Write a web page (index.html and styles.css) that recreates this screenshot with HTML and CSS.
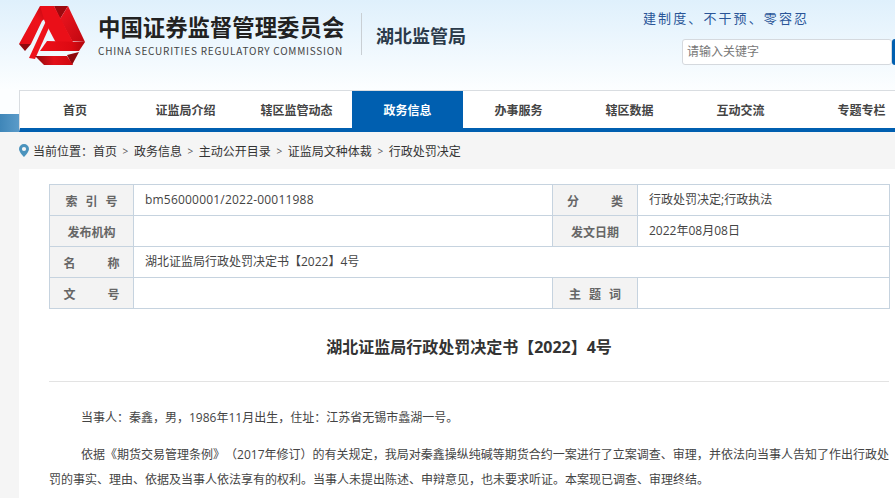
FILE: index.html
```html
<!DOCTYPE html>
<html lang="zh-CN">
<head>
<meta charset="utf-8">
<title>行政处罚决定</title>
<link rel="stylesheet" href="styles.css">
</head>
<body>
<div class="page">
  <header class="top">
    <div class="masthead">
      <svg class="logo" viewBox="19 6 67 60" width="67" height="60" aria-hidden="true">
        <defs>
          <linearGradient id="gh" x1="0" x2="1" y1="0" y2="0"><stop offset="0" stop-color="#ee1019"/><stop offset="0.7" stop-color="#dd0912"/><stop offset="1" stop-color="#b0060d"/></linearGradient>
          <linearGradient id="gb" x1="0" x2="1" y1="0" y2="0"><stop offset="0" stop-color="#8c0a0e"/><stop offset="0.5" stop-color="#e3101a"/><stop offset="1" stop-color="#d0080f"/></linearGradient>
          <linearGradient id="gd" x1="0" x2="1" y1="0" y2="1"><stop offset="0" stop-color="#f01620"/><stop offset="1" stop-color="#c00710"/></linearGradient>
          <linearGradient id="gl" x1="1" x2="0" y1="0" y2="1"><stop offset="0" stop-color="#b8060e"/><stop offset="0.35" stop-color="#ee121b"/><stop offset="1" stop-color="#e50d16"/></linearGradient>
        </defs>
        <polygon points="54,6 68,6 60,19" fill="#9c090e"/>
        <polygon points="68,6 85,42 72,41 60,19" fill="url(#gd)"/>
        <polygon points="40,6 19,44 31,44 42,21 44.500,19 47,8" fill="url(#gl)"/>
        <polygon points="19,44 31,44 25,51" fill="#8f090d"/>
        <polygon points="46,21 52,21 35,59 29,58" fill="#ee121b"/>
        <polygon points="40,6 54,6 74,44 61,50 55,41 44.500,21" fill="#ea0f18"/>
        <polygon points="47,41 85,42 79,51 40,51" fill="url(#gh)"/>
        <polygon points="67,55 79,52 72,65" fill="#8f090d"/>
        <polygon points="35,56 67,56 73,65 44,65" fill="url(#gb)"/>
      </svg>
      <div class="org">
        <div class="org-cn">中国证券监督管理委员会</div>
        <div class="org-en">CHINA SECURITIES REGULATORY COMMISSION</div>
      </div>
      <div class="bureau">湖北监管局</div>
      <div class="tools">
        <div class="slogan">建制度、不干预、零容忍</div>
        <div class="search">
          <span class="search-input">请输入关键字</span>
          <span class="search-btn"></span>
        </div>
      </div>
    </div>
    <span class="stub"></span>
    <nav class="nav">
      <a class="nav-item first">首页</a>
      <a class="nav-item">证监局介绍</a>
      <a class="nav-item">辖区监管动态</a>
      <a class="nav-item active">政务信息</a>
      <a class="nav-item">办事服务</a>
      <a class="nav-item">辖区数据</a>
      <a class="nav-item">互动交流</a>
      <a class="nav-item last">专题专栏</a>
    </nav>
  </header>

  <div class="crumbs">
    <svg class="pin" viewBox="0 0 10 13" width="10" height="13" aria-hidden="true">
      <path d="M5 0a5 5 0 0 0-5 5c0 3.2 5 8 5 8s5-4.800 5-8a5 5 0 0 0-5-5zm0 7.100a2.100 2.100 0 1 1 0-4.200 2.100 2.100 0 0 1 0 4.200z" fill="#4b93bd"/>
    </svg>
    <span>当前位置：首页</span><i>&gt;</i><span>政务信息</span><i>&gt;</i><span>主动公开目录</span><i>&gt;</i><span>证监局文种体裁</span><i>&gt;</i><span>行政处罚决定</span>
  </div>

  <main class="sheet">
    <table class="meta">
      <colgroup><col class="c1"><col class="c2"><col class="c3"><col class="c4"></colgroup>
      <tr>
        <th><span class="lab w52">索引号</span></th><td class="num">bm56000001/2022-00011988</td>
        <th><span class="lab w56">分类</span></th><td>行政处罚决定;行政执法</td>
      </tr>
      <tr>
        <th><span class="lab w48">发布机构</span></th><td></td>
        <th><span class="lab w48">发文日期</span></th><td>2022年08月08日</td>
      </tr>
      <tr>
        <th><span class="lab w56">名称</span></th><td colspan="3">湖北证监局行政处罚决定书【2022】4号</td>
      </tr>
      <tr>
        <th><span class="lab w56">文号</span></th><td></td>
        <th><span class="lab w52">主题词</span></th><td></td>
      </tr>
    </table>
    <h1 class="title">湖北证监局行政处罚决定书【2022】4号</h1>
    <article class="body">
      <p>当事人：秦鑫，男，1986年11月出生，住址：江苏省无锡市蠡湖一号。</p>
      <p>依据《期货交易管理条例》（2017年修订）的有关规定，我局对秦鑫操纵纯碱等期货合约一案进行了立案调查、审理，并依法向当事人告知了作出行政处罚的事实、理由、依据及当事人依法享有的权利。当事人未提出陈述、申辩意见，也未要求听证。本案现已调查、审理终结。</p>
    </article>
  </main>
</div>
</body>
</html>
```
FILE: styles.css
```css
* { box-sizing: border-box; }
html, body { margin: 0; padding: 0; width: 895px; height: 498px; overflow: hidden; }
body { background: #f5f5f5; font-family: "Open Sans", "Noto Sans CJK SC", sans-serif; font-size: 12px; color: #333; text-spacing-trim: space-all; }
.page { width: 895px; overflow: hidden; }

.top { position: relative; height: 132px; background: linear-gradient(#dff0fc, #fcfeff 90px); }
.masthead { display: flex; height: 90px; padding: 6px 0 0 19px; align-items: flex-start; }
.logo { flex: none; display: block; }
.org { flex: none; margin-left: 12px; width: 263px; }
.org-cn { font-family: "Noto Sans CJK SC", sans-serif; font-size: 22.4px; font-weight: 700; line-height: 30px; margin-top: 5px; color: #222; white-space: nowrap; }
.org-en { font-family: "Noto Sans CJK SC", sans-serif; font-size: 10px; line-height: 14px; margin-top: 3px; letter-spacing: 0.76px; color: #444; white-space: nowrap; }
.bureau { flex: none; margin-top: 7px; padding: 0 0 0 14px; border-left: 1px solid #c9cfd4; height: 42px; line-height: 47px; width: 321px; font-size: 18px; font-weight: 700; color: #2b3a4a; white-space: nowrap; }
.tools { flex: none; width: 213px; }
.slogan { margin-top: 2px; text-indent: -39px; font-family: "Noto Sans CJK SC", serif; font-size: 13px; line-height: 20px; letter-spacing: 2.1px; color: #2a5598; white-space: nowrap; }
.search { display: flex; height: 26px; margin-top: 11px; }
.search-input { flex: none; width: 210px; padding-left: 4px; line-height: 24px; background: #fff; border: 1px solid #d5d9de; border-radius: 3px; color: #777; }
.search-btn { flex: none; width: 3px; background: #005fb0; border-radius: 3px 0 0 3px; }
.stub { position: absolute; left: 0; top: 114px; width: 19px; height: 18px; background: linear-gradient(90deg, #3f86b8, #5a9bc9); }
.nav { display: flex; width: 876px; height: 42px; margin-left: 19px; background: #fff; border-top: 1px solid #d9dde1; border-left: 1px solid #d9dde1; border-bottom: 4px solid #005fb0; overflow: hidden; }
.nav-item { flex: none; width: 111px; line-height: 37px; text-align: center; font-family: "Noto Sans CJK SC", sans-serif; font-weight: 700; color: #444; }
.nav-item.first { width: 110px; }
.nav-item.active { background: #005fb0; color: #fff; }
.nav-item.last { margin-left: 10px; }

.crumbs { display: flex; align-items: center; height: 37px; padding-left: 19px; color: #333; }
.pin { margin-right: 4px; flex: none; }
.crumbs i { font-style: normal; font-size: 10px; color: #555; margin: 0 5.6px; }

.sheet { margin-left: 19px; height: 329px; padding: 15px 0 0 30px; background: #fff; overflow: hidden; }
.meta { width: 840px; table-layout: fixed; border-collapse: collapse; border: 1px solid #c6d3df; }
.c1 { width: 84px; } .c2 { width: 419px; } .c3 { width: 85px; } .c4 { width: 252px; }
.meta th, .meta td { height: 31px; padding: 0; border: 1px solid #c6d3df; font-size: 12px; line-height: 16px; }
.meta th { background: #f3f3f3; color: #666; text-align: center; font-weight: 700; font-family: "Noto Sans CJK SC", sans-serif; }
.meta td { padding-left: 11px; color: #444; }
.meta td.num { letter-spacing: 0.2px; }
.lab { display: inline-block; vertical-align: middle; text-align: justify; text-align-last: justify; }
.w48 { width: 48px; } .w52 { width: 52px; } .w56 { width: 56px; }

.title { width: 840px; height: 73px; margin: 0 0 23px; border-bottom: 1px solid #e3e3e3; font-size: 16px; line-height: 24px; padding-top: 26px; font-weight: 700; text-align: center; color: #333; }
.body { width: 840px; color: #444; }
.body p { margin: 0 0 12px; text-indent: 32px; line-height: 25px; text-align: justify; }
```
